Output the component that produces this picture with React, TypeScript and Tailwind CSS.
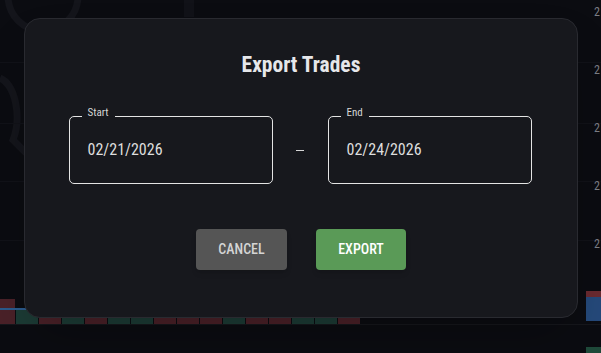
import { useState } from 'react';

const font = { fontFamily: '"Roboto Condensed", "Liberation Sans Narrow", Roboto, sans-serif' };

const volume = ['r', 'g', 'r', 'g', 'g', 'r', 'r', 'r', 'g', 'r', 'r', 'g', 'g', 'r'];

function ChartBackdrop() {
  return (
    <div className="absolute inset-0 overflow-hidden bg-[#0b0c11]">
      {/* watermark */}
      <svg className="absolute inset-0" width="601" height="353" fill="none">
        <path d="M8 -4 A35 35 0 0 0 78 -4" stroke="#14151b" strokeWidth="7" />
        <rect x="184" y="0" width="10" height="17" fill="#111218" />
        <path d="M0 78 A22 40 0 0 1 13 140 L26 153" stroke="#14151b" strokeWidth="7" />
        {[62, 123, 181, 240].map((y) => (
          <line key={y} x1="0" x2="601" y1={y + 0.5} y2={y + 0.5} stroke="#111218" />
        ))}
        <line x1="0" x2="601" y1="324.5" y2="324.5" stroke="#16171c" />
      </svg>

      {/* price axis */}
      <div className="absolute left-[594px] top-[4px] flex flex-col gap-[41px] text-[12px] leading-[17px] text-[#7d7f86]">
        <span>2</span>
        <span>2</span>
        <span>2</span>
        <span>2</span>
        <span>2</span>
      </div>

      {/* volume strip */}
      <div className="absolute left-0 top-[299px] flex items-end gap-px">
        <div className="relative w-[15px] h-[25px] bg-[#4a2128]">
          <div className="absolute left-0 top-[9px] w-[26px] h-[2px] bg-[#2b5a8c]" />
        </div>
        <div className="w-[22px] h-[15px] bg-[#1c3b35]" />
        {volume.map((c, i) => (
          <div key={i} className={`w-[22px] h-[6px] ${c === 'r' ? 'bg-[#4a2128]' : 'bg-[#1c3b35]'}`} />
        ))}
      </div>

      {/* right price tags */}
      <div className="absolute left-[586px] top-[291px] w-[15px] flex flex-col">
        <div className="h-[6px] bg-[#6a2a30]" />
        <div className="h-[24px] bg-[#25497a]" />
        <div className="h-[26px]" />
        <div className="h-[6px] bg-[#1f4a3a]" />
      </div>
    </div>
  );
}

function DateField({ label, value }: { label: string; value: string }) {
  return (
    <div className="relative w-[204px] h-[68px] rounded-[5px] border border-[#e4e4e4] flex items-center pl-[18px]">
      <span className="absolute left-[12px] top-[-10px] px-[6px] bg-[#17181d] text-[11px] leading-none text-[#d6d6d6]">
        {label}
      </span>
      <span className="text-[16px] text-[#dedede]">{value}</span>
    </div>
  );
}

export default function App() {
  const [start] = useState('02/21/2026');
  const [end] = useState('02/24/2026');

  return (
    <div className="relative w-[601px] h-[353px] overflow-hidden" style={font}>
      <ChartBackdrop />
      <div className="absolute inset-0 flex justify-center pt-[18px] pl-px">
        <div className="w-[554px] h-[300px] rounded-[16px] border border-[#292a30] bg-[#17181d] flex flex-col items-center pt-[32px] shadow-2xl">
          <h2 className="text-[21.5px] leading-[28px] font-bold text-[#e6e7ea]">Export Trades</h2>
          <div className="mt-[37px] flex items-center pr-[2px]">
            <DateField label="Start" value={start} />
            <div className="w-[55px] flex justify-center pt-[1px] pr-[1px]">
              <div className="w-[8px] h-px bg-[#d6d6d6]" />
            </div>
            <DateField label="End" value={end} />
          </div>
          <div className="mt-[45px] flex gap-[29px]">
            <button className="w-[91px] h-[41px] rounded-[4px] bg-[#555555] text-[14px] font-medium text-[#d4d4d4] uppercase shadow-md">
              Cancel
            </button>
            <button className="w-[90px] h-[41px] rounded-[4px] bg-[#5a9a57] text-[14px] font-medium text-white uppercase shadow-md">
              Export
            </button>
          </div>
        </div>
      </div>
    </div>
  );
}
